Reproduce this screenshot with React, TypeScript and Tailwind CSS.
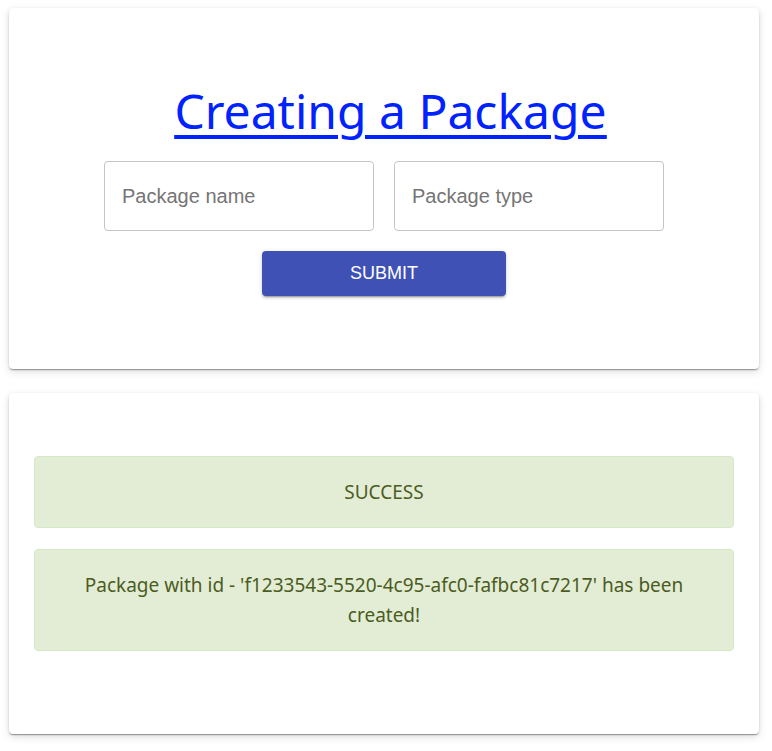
import React from 'react';

const cardShadow =
  'shadow-[0px_2px_1px_-1px_rgba(0,0,0,0.2),0px_1px_1px_0px_rgba(0,0,0,0.14),0px_1px_3px_0px_rgba(0,0,0,0.12),0_3px_8px_rgba(0,0,0,0.12)]';

const App = () => {
  return (
    <div className="min-h-screen bg-white pt-[8px] pl-[9px]">
      {/* Form card */}
      <div className={`w-[750px] h-[361px] bg-white rounded-[4px] ${cardShadow} flex flex-col items-center pt-[75px]`}>
        <h1 className="ml-[13px] font-['Noto_Sans',sans-serif] text-[48px] leading-[56px] text-[#0022ff] underline decoration-[4px] underline-offset-[6px]">
          <a href="#">Creating a Package</a>
        </h1>
        <div className="flex gap-[20px] mt-[22px]">
          <input
            placeholder="Package name"
            className="w-[270px] h-[70px] rounded-[4px] border border-[#c4c4c4] px-[17px] text-[20px] font-['Liberation_Sans',Arial,sans-serif] placeholder:text-[#757575] outline-none"
          />
          <input
            placeholder="Package type"
            className="w-[270px] h-[70px] rounded-[4px] border border-[#c4c4c4] px-[17px] text-[20px] font-['Liberation_Sans',Arial,sans-serif] placeholder:text-[#757575] outline-none"
          />
        </div>
        <button className="mt-[20px] w-[244px] h-[45px] rounded-[4px] bg-[#3f51b5] text-white text-[18px] font-['Liberation_Sans',Arial,sans-serif] shadow-[0px_3px_1px_-2px_rgba(0,0,0,0.2),0px_2px_2px_0px_rgba(0,0,0,0.14),0px_1px_5px_0px_rgba(0,0,0,0.12)]">
          SUBMIT
        </button>
      </div>

      {/* Result card */}
      <div className={`mt-[24px] w-[750px] h-[341px] bg-white rounded-[4px] ${cardShadow} px-[25px] pt-[63px] flex flex-col gap-[21px]`}>
        <div className="rounded-[4px] border border-[#d6e9c6] bg-[#e3edd6] py-[20px] text-center text-[19px] leading-[30px] text-[#4c5c1e] font-['Noto_Sans',sans-serif]">
          SUCCESS
        </div>
        <div className="rounded-[4px] border border-[#d6e9c6] bg-[#e3edd6] py-[20px] px-[40px] text-center text-[19px] leading-[30px] text-[#4c5c1e] font-['Noto_Sans',sans-serif]">
          Package with id - 'f1233543-5520-4c95-afc0-fafbc81c7217' has been created!
        </div>
      </div>
    </div>
  );
};

export default App;
